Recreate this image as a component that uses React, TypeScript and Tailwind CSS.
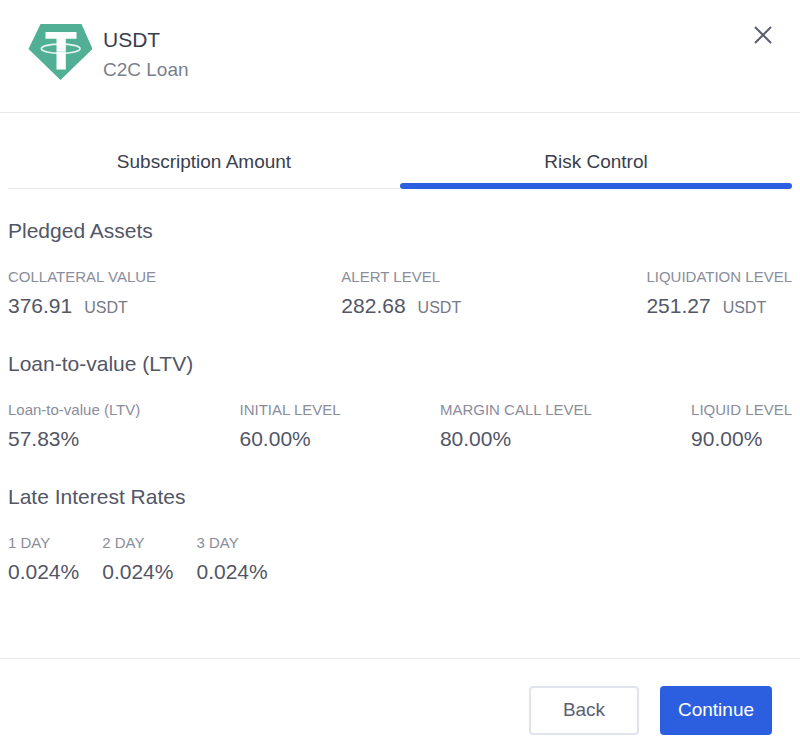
import React, { useState } from 'react';

interface Stat {
  label: string;
  value: string;
  unit?: string;
}

const tabs = ['Subscription Amount', 'Risk Control'];

const pledgedAssets: Stat[] = [
  { label: 'COLLATERAL VALUE', value: '376.91', unit: 'USDT' },
  { label: 'ALERT LEVEL', value: '282.68', unit: 'USDT' },
  { label: 'LIQUIDATION LEVEL', value: '251.27', unit: 'USDT' },
];

const loanToValue: Stat[] = [
  { label: 'Loan-to-value (LTV)', value: '57.83%' },
  { label: 'INITIAL LEVEL', value: '60.00%' },
  { label: 'MARGIN CALL LEVEL', value: '80.00%' },
  { label: 'LIQUID LEVEL', value: '90.00%' },
];

const lateRates: Stat[] = [
  { label: '1 DAY', value: '0.024%' },
  { label: '2 DAY', value: '0.024%' },
  { label: '3 DAY', value: '0.024%' },
];

const TetherLogo: React.FC = () => (
  <svg viewBox="0 0 64 56" className="w-16 h-14" aria-hidden="true">
    <path d="M12.5 0H53.5L64.5 25 32.5 56 .5 25Z" fill="#50af95" />
    <ellipse cx="32.7" cy="24.7" rx="19.3" ry="4.6" fill="none" stroke="#e6f5f0" strokeWidth="1.7" />
    <path d="M17.5 8H48.5V14.7H37.8V45.5H28.5V14.7H17.5Z" fill="#fff" />
    <path d="M28.5 27.4C31 27.8 35 27.8 37.8 27.4" fill="none" stroke="#50af95" strokeWidth=".6" opacity=".5" />
  </svg>
);

const StatItem: React.FC<{ stat: Stat }> = ({ stat }) => (
  <div>
    <dt className="text-[15px] leading-5 text-[#8a8d9b]">{stat.label}</dt>
    <dd className="mt-[3px] text-[21px] leading-[31px] text-[#525666]">
      {stat.value}
      {stat.unit && <span className="ml-3 text-base text-[#757989]">{stat.unit}</span>}
    </dd>
  </div>
);

const StatSection: React.FC<{ title: string; stats: Stat[]; spread?: boolean }> = ({ title, stats, spread = true }) => (
  <section>
    <h2 className="text-[21px] leading-8 text-[#525666]">{title}</h2>
    <dl className={`mt-5 flex ${spread ? 'justify-between' : 'gap-[23px]'}`}>
      {stats.map((stat) => (
        <StatItem key={stat.label} stat={stat} />
      ))}
    </dl>
  </section>
);

const App: React.FC = () => {
  const [activeTab, setActiveTab] = useState('Risk Control');

  return (
    <div className="min-h-screen flex flex-col bg-white font-['Liberation_Sans',Arial,sans-serif]">
      <header className="flex items-start justify-between border-b border-[#e8e9ec] pt-6 pb-7 pl-7 pr-6">
        <div className="flex gap-[11px]">
          <TetherLogo />
          <div>
            <h1 className="text-[21px] leading-8 text-[#3a3e4d]">USDT</h1>
            <p className="text-[19px] leading-7 text-[#7b7f8c]">C2C Loan</p>
          </div>
        </div>
        <button type="button" aria-label="Close" className="px-1 py-0.5 text-[#5b6070] cursor-pointer">
          <svg viewBox="0 0 18 18" className="size-[18px]" fill="none" stroke="currentColor" strokeWidth="2">
            <path d="M1 1 17 17M17 1 1 17" />
          </svg>
        </button>
      </header>

      <main className="flex-1 px-2 pt-8 pb-8">
        <div role="tablist" className="flex">
          {tabs.map((tab) => (
            <button
              key={tab}
              type="button"
              role="tab"
              aria-selected={activeTab === tab}
              onClick={() => setActiveTab(tab)}
              className="flex-1 flex flex-col cursor-pointer"
            >
              <span className="w-full h-[38px] leading-[34px] text-center text-[19px] text-[#3a3e4d]">{tab}</span>
              <span className="w-full h-[6px] flex items-end">
                <span className={activeTab === tab ? 'w-full h-[6px] rounded-sm bg-[#2c5fe0]' : 'w-full h-px bg-[#e8e9ec]'} />
              </span>
            </button>
          ))}
        </div>

        <div className="mt-[26px] flex flex-col gap-[27px]">
          <StatSection title="Pledged Assets" stats={pledgedAssets} />
          <StatSection title="Loan-to-value (LTV)" stats={loanToValue} />
          <StatSection title="Late Interest Rates" stats={lateRates} spread={false} />
        </div>
      </main>

      <footer className="flex justify-end gap-[21px] border-t border-[#e8e9ec] pt-[27px] pb-[21px] px-7">
        <button
          type="button"
          className="h-[49px] w-[110px] rounded-sm border-2 border-[#e1e3ee] text-[19px] text-[#5b6070] cursor-pointer"
        >
          Back
        </button>
        <button
          type="button"
          className="h-[49px] w-[112px] rounded-sm bg-[#2c5fe0] text-[19px] text-white cursor-pointer"
        >
          Continue
        </button>
      </footer>
    </div>
  );
};

export default App;
